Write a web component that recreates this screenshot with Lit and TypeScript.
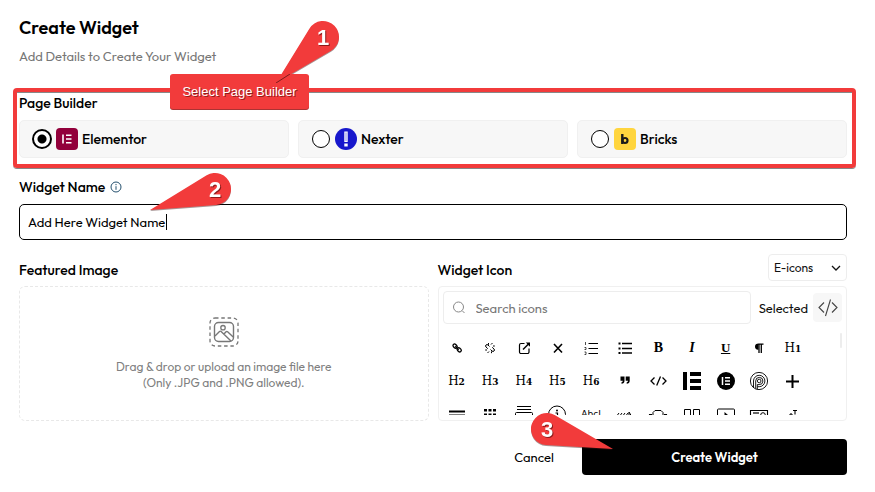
import { LitElement, html, svg, css, TemplateResult } from "lit";
import { customElement, property, state } from "lit/decorators.js";

/* Teardrop marker: a numbered disc whose two tangents meet at a tip. */
@customElement("step-marker")
class StepMarker extends LitElement {
  @property({ type: Number }) step = 1;
  /* Tip position relative to the centre of the disc. */
  @property({ type: Number }) dx = 0;
  @property({ type: Number }) dy = 0;

  static styles = css`
    :host { display: block; width: 32px; height: 32px; pointer-events: none; }
    .shape { display: block; overflow: visible; }
    .drop { fill: #f23b3b; filter: drop-shadow(0 1px 0 rgba(60, 20, 20, 0.45)); }
    .number {
      fill: #fff;
      font: bold 22px "Liberation Sans", Arial, sans-serif;
      text-anchor: middle;
      filter: drop-shadow(1px 1px 0 rgba(60, 0, 0, 0.55));
    }
  `;

  private outline(): string {
    const r = 16;
    const dist = Math.hypot(this.dx, this.dy);
    const dir = Math.atan2(this.dy, this.dx);
    const spread = Math.acos(r / dist);
    const at = (a: number) => `${(r * Math.cos(a)).toFixed(2)} ${(r * Math.sin(a)).toFixed(2)}`;
    return `M${this.dx} ${this.dy}L${at(dir + spread)}A${r} ${r} 0 1 1 ${at(dir - spread)}Z`;
  }

  render() {
    return html`<svg class="shape" width="32" height="32" viewBox="-16 -16 32 32" aria-hidden="true">
      <path class="drop" d=${this.outline()} />
      <text class="number" x="0" y="8">${this.step}</text>
    </svg>`;
  }
}

const line = (d: string, w = 1) =>
  svg`<path d=${d} fill="none" stroke="currentColor" stroke-width=${w} />`;
const solid = (d: string) => svg`<path d=${d} fill="currentColor" />`;

type Glyph = { name: string; art?: TemplateResult; text?: string; sub?: string; kind?: string };

const heading = (n: number): Glyph => ({ name: `Heading ${n}`, text: "H", sub: String(n) });

const GLYPHS: Glyph[] = [
  { name: "Link", art: svg`<g fill="none" stroke="currentColor" stroke-width="1.3"><rect x="5.800" y="6.400" width="4.600" height="3.200" rx="1.600" transform="rotate(45 8 8)"/><rect x="9.900" y="10.200" width="4.600" height="3.200" rx="1.600" transform="rotate(45 12.200 11.800)"/><path d="M8.300 8.300l3.400 3.400"/></g>` },
  { name: "Unlink", art: svg`<g fill="none" stroke="currentColor" stroke-width="1"><path d="M9.500 8.500L8 7a1.400 1.400 0 0 0-2 2l1.800 1.700M10.500 11.500L12 13a1.400 1.400 0 0 0 2-2l-1.800-1.700M8.500 5v1.800M11 6.500L12.500 5M13 8h1.800M5.200 12H7M9 13.500L7.500 15M11.500 13.400v1.800"/></g>` },
  { name: "External link", art: svg`${line("M10.500 5.500H7A1.500 1.500 0 0 0 5.500 7v7A1.500 1.500 0 0 0 7 15.500h6.500a1.500 1.500 0 0 0 1.500-1.500V10.500", 1.2)}${line("M9 11.500L14.500 6", 1.5)}${solid("M11.800 4.500h4.200v4.200z")}` },
  { name: "Close", art: line("M7 6l8 8.500M15 6l-8 8.500", 1.6) },
  { name: "Numbered list", art: svg`${line("M7.500 5.500H17M7.500 10.500H17M7.500 15.500H17", 1.2)}${line("M4.500 4v3M3.500 9.500h1.500v2h-1.500M3.500 14h1.500v2.500h-1.500", 0.7)}` },
  { name: "Bulleted list", art: svg`${line("M7 5.500H17M7 10.500H17M7 15H17", 1.5)}${line("M3.500 5.500h2M3.500 10.500h2M3.500 15h2", 1.8)}` },
  { name: "Bold", text: "B", kind: "bold" },
  { name: "Italic", text: "I", kind: "italic" },
  { name: "Underline", text: "U", kind: "under" },
  { name: "Paragraph", art: svg`${solid("M9.500 5.500h5v1.200h-5v5H9a3 3 0 0 1-3-3.100c0-1.800 1.300-3.100 3.500-3.100z")}${line("M10 6v9M12.300 6v9", 1.3)}` },
  heading(1),
  heading(2),
  heading(3),
  heading(4),
  heading(5),
  heading(6),
  { name: "Quote", art: solid("M5.500 5.500h4v4.200c0 2-1.200 3-3 3.100v-1.600c.9-.1 1.300-.6 1.300-1.500H5.500zM10.700 5.500h4v4.200c0 2-1.200 3-3 3.100v-1.600c.9-.1 1.300-.6 1.300-1.500h-2.300z") },
  { name: "Code", art: line("M6.500 6.500L3 10L6.500 13.500M14.500 6.500l3.500 3.500-3.500 3.500M12.500 5.500l-3.800 9", 1.3) },
  { name: "Elementor bars", art: solid("M1 1h4v18H1zM8 1h11v4H8zM8 8h11v4H8zM8 15h11v4H8z") },
  { name: "Elementor", art: svg`<circle cx="10" cy="10" r="9" fill="currentColor"/><path d="M6.500 6v8M9 6.800h5M9 10h5M9 13.200h5" stroke="#fff" stroke-width="1.500" fill="none"/>` },
  { name: "Parking spiral", art: svg`<g fill="none" stroke="currentColor" stroke-width=".9"><circle cx="10" cy="10" r="8.600"/><path d="M4.500 16.500V10a5.700 5.700 0 1 1 5.700 5.700H8.300v2.700M6.700 17.700V10a3.600 3.600 0 1 1 3.500 3.600H8.300v2.100"/><circle cx="10.200" cy="10" r="1.800"/></g>` },
  { name: "Plus", art: line("M9.500 4v13M3 10.500h13", 2) },
  { name: "Divider", art: line("M2 7.500h16M2 11.500h16", 1.8) },
  { name: "Grid", art: solid("M4 5h3v2.500H4zM8.500 5h3v2.500h-3zM13 5h3v2.500h-3zM4 9.500h3v3H4zM8.500 9.500h3v3h-3zM13 9.500h3v3h-3z") },
  { name: "Stack", art: svg`${line("M3 2.500h14M3 5.500h14")}${line("M1.500 16V9.500a1 1 0 0 1 1-1h15a1 1 0 0 1 1 1V16")}` },
  { name: "Accessibility", art: svg`<circle cx="10" cy="10.500" r="8.500" fill="none" stroke="currentColor"/><circle cx="10" cy="6.500" r="1" fill="currentColor"/>${line("M8.500 9h2v5", 1.2)}` },
  { name: "Animated headline", text: "AbcI", kind: "small" },
  { name: "Barcode", art: line("M1 13l3-4M4 13l3-4M7 13l3-4M10 13l3-4M14 13V8l3 5", 1) },
  { name: "Carousel", art: svg`${line("M5 12V8.500L7 6.500h6l2 2V12")}${line("M1.500 12V10.500h2.500M18.500 12V10.500H16", 1.1)}` },
  { name: "Columns", art: line("M2.500 16V5.500h6V16M11.500 16V5.500h6V16") },
  { name: "Slides", art: svg`${line("M1.500 16V6a1 1 0 0 1 1-1h15a1 1 0 0 1 1 1v10")}${solid("M8.500 8l4 3.500h-4z")}` },
  { name: "Form", art: svg`${line("M1.500 16V6.500h17V16", 1.1)}${line("M4 9h6", 1.2)}<circle cx="14" cy="11" r="2.300" fill="none" stroke="currentColor"/>` },
  { name: "Text path", art: line("M6 11h4M8 9v3M10 6.500h4M12 6.500v4", 1.1) },
];

@customElement("icon-picker")
class IconPicker extends LitElement {
  static styles = css`
    :host { display: block; }
    .panel {
      box-sizing: border-box;
      padding: 4px 4px 5px;
      border: 1px solid #f0f0f0;
      border-radius: 4px;
      color: #111;
    }
    .bar { display: flex; align-items: center; }
    .search {
      flex: 1;
      display: flex;
      align-items: center;
      gap: 10px;
      box-sizing: border-box;
      height: 33px;
      min-width: 0;
      padding: 0 8px;
      border: 1px solid #ededed;
      border-radius: 4px;
      color: #888;
    }
    .field {
      flex: 1;
      min-width: 0;
      padding: 0;
      border: 0;
      outline: 0;
      background: none;
      font: 400 13px/18px Outfit, Lato, sans-serif;
      color: #111;
    }
    .field::placeholder { color: #777; opacity: 1; }
    .selected { margin: 0 5px 0 8px; font-size: 13px; line-height: 18px; }
    .swatch {
      display: flex;
      align-items: center;
      justify-content: center;
      width: 29px;
      height: 29px;
      border-radius: 4px;
      background: #f7f7f7;
      color: #444;
    }
    .scroller {
      display: flex;
      justify-content: space-between;
      height: 82px;
      margin-top: 9px;
      overflow: hidden;
    }
    .grid {
      flex: 1;
      display: grid;
      grid-template-columns: repeat(11, 20px);
      grid-auto-rows: 20px;
      justify-content: space-between;
      row-gap: 13px;
      padding: 5px 37px 0 4px;
    }
    .icon {
      display: flex;
      align-items: center;
      justify-content: center;
      width: 20px;
      height: 20px;
      padding: 0;
      border: 0;
      background: none;
      color: #000;
      font: 12px/20px "DejaVu Serif", serif;
      cursor: pointer;
    }
    .sub { font-size: 9px; padding-top: 2px; font-weight: bold; }
    .bold { font: bold 14px/20px "Liberation Serif", serif; }
    .italic { font: italic bold 14px/20px "Liberation Serif", serif; }
    .under { font: bold 13px/20px "Liberation Serif", serif; text-decoration: underline; }
    .small { font: 9px/18px "DejaVu Sans", sans-serif; }
    .thumb { width: 2px; height: 15px; background: #ededed; border-radius: 1px; }
  `;

  render() {
    return html`<div class="panel">
      <div class="bar">
        <label class="search">
          <svg width="14" height="14" viewBox="0 0 14 14" fill="none" stroke="currentColor" aria-hidden="true">
            <circle cx="6.500" cy="6" r="5" /><path d="M10.200 9.700l2.300 2.300" />
          </svg>
          <input class="field" type="text" placeholder="Search icons" aria-label="Search icons" />
        </label>
        <span class="selected">Selected</span>
        <span class="swatch">
          <svg width="20" height="20" viewBox="0 0 20 20" fill="none" stroke="currentColor" stroke-width="1.100" aria-hidden="true">
            <path d="M6 4.500L1 9.500L6 14.500M14 4.500l5 5L14 14.500M12.500 1.500l-5 16.500" />
          </svg>
        </span>
      </div>
      <div class="scroller">
        <div class="grid">
          ${GLYPHS.map(
            (g) => html`<button type="button" class="icon" aria-label=${g.name}>
              ${g.art
                ? html`<svg width="20" height="20" viewBox="0 0 20 20" aria-hidden="true">${g.art}</svg>`
                : html`<span class=${g.kind ?? "head"}>${g.text}</span>${g.sub ? html`<span class="sub">${g.sub}</span>` : ""}`}
            </button>`
          )}
        </div>
        <span class="thumb"></span>
      </div>
    </div>`;
  }
}

const BUILDERS = [
  {
    id: "elementor",
    label: "Elementor",
    logo: svg`<rect width="22" height="22" rx="4" fill="#92003b"/><path d="M7 6.500v9M10 7.300h5.500M10 11h5.500M10 14.700h5.500" stroke="#fff" stroke-width="1.600" fill="none"/>`,
  },
  {
    id: "nexter",
    label: "Nexter",
    logo: svg`<circle cx="11" cy="11" r="11" fill="#1717cc"/><path d="M9.300 3.500h3.400v10.500h-3.400zM9.300 15.500h3.400v3h-3.400z" fill="#fff"/><path d="M11 4.500v8.500" stroke="#1717cc" stroke-width=".5"/>`,
  },
  {
    id: "bricks",
    label: "Bricks",
    logo: svg`<rect width="22" height="22" rx="4" fill="#ffd53e"/><path d="M8.300 6v10" stroke="#1a1a1a" stroke-width="2.400"/><circle cx="11" cy="12.500" r="2.500" fill="none" stroke="#1a1a1a" stroke-width="2.200"/>`,
  },
];

@customElement("app-root")
class AppRoot extends LitElement {
  @state() private builder = "elementor";

  static styles = css`
    :host {
      display: block;
      box-sizing: border-box;
      padding: 16px 28px 16px 19px;
      background: #fff;
      color: #000;
      font: 400 13px/18px Outfit, Lato, sans-serif;
    }
    .title { margin: 0; font-size: 18px; line-height: 24px; font-weight: 600; }
    .lead { margin: 7px 0 0; color: #777; }
    .group { position: relative; min-width: 0; margin: 28px 0 0; padding: 0; border: 0; }
    .label { display: block; padding: 0; font-size: 14px; line-height: 20px; font-weight: 500; }
    .choices { display: grid; grid-template-columns: repeat(3, 1fr); gap: 9px; margin-top: 7px; }
    .choice {
      display: flex;
      align-items: center;
      gap: 4px;
      box-sizing: border-box;
      height: 38px;
      padding: 0 12px;
      border: 1px solid #f0f0f0;
      border-radius: 5px;
      background: #f7f7f7;
      font-size: 14px;
      font-weight: 500;
    }
    .radio {
      appearance: none;
      box-sizing: border-box;
      width: 18px;
      height: 18px;
      margin: 1px;
      border: 1px solid #000;
      border-radius: 50%;
      background: #fff;
    }
    .radio:checked {
      width: 20px;
      height: 20px;
      margin: 0;
      border-width: 2px;
      background: radial-gradient(circle, #000 4px, #fff 5px);
    }
    .frame {
      position: absolute;
      inset: -5px -9px -10px -6px;
      border: 4px solid #f23b3b;
      border-radius: 4px;
      box-shadow: 0 1px 0 #888, inset 0 1px 0 #888;
      pointer-events: none;
    }
    .note {
      position: absolute;
      top: -19px;
      left: 151px;
      box-sizing: border-box;
      width: 139px;
      height: 35px;
      border-radius: 3px;
      background: #f23b3b;
      box-shadow: 0 1px 0 #a33;
      color: #fff;
      font: 13px/36px "Liberation Sans", Arial, sans-serif;
      text-align: center;
      text-shadow: 1px 1px 0 rgba(60, 0, 0, 0.55);
    }
    .leader { position: absolute; top: -19px; left: 257px; }
    .marker { position: absolute; }
    .first { top: -72px; left: 288px; }
    .second { top: -4px; left: 180px; }
    .third { top: -26px; left: -51px; }
    .name { position: relative; margin-top: 19px; }
    .caption { display: flex; align-items: center; gap: 5px; color: #000; }
    .text {
      display: block;
      box-sizing: border-box;
      width: 100%;
      height: 36px;
      margin-top: 7px;
      padding: 0 8px;
      border: 1px solid #000;
      border-radius: 5px;
      outline: 0;
      background: #fff;
      color: #000;
      caret-color: transparent;
      font: inherit;
    }
    .caret { position: absolute; left: 147px; bottom: 10px; width: 1px; height: 16px; background: #000; }
    .columns { display: grid; grid-template-columns: 1fr 1fr; gap: 9px; margin-top: 14px; }
    .column { display: flex; flex-direction: column; gap: 5px; min-width: 0; }
    .head { display: flex; align-items: flex-end; justify-content: space-between; height: 27px; }
    .head .label { padding-bottom: 1px; }
    .pick { position: relative; display: flex; align-items: center; }
    .select {
      appearance: none;
      width: 79px;
      height: 27px;
      padding: 0 5px;
      border: 1px solid #ededed;
      border-radius: 4px;
      background: #fff;
      color: #111;
      font: 400 12px/18px Outfit, Lato, sans-serif;
    }
    .chevron { position: absolute; right: 6px; pointer-events: none; }
    .drop {
      flex: 1;
      display: flex;
      flex-direction: column;
      align-items: center;
      justify-content: center;
      gap: 12px;
      box-sizing: border-box;
      border: 1px dashed #e8e8e8;
      border-radius: 6px;
      color: #808080;
      font-size: 12px;
      line-height: 16px;
      text-align: center;
    }
    .file { position: absolute; width: 1px; height: 1px; opacity: 0; }
    .actions { display: flex; justify-content: flex-end; margin-top: 18px; }
    .cancel, .create {
      height: 36px;
      padding: 0;
      border: 0;
      border-radius: 4px;
      font: inherit;
      cursor: pointer;
    }
    .cancel { width: 96px; background: none; color: #000; }
    .submit { position: relative; width: 32%; }
    .create { width: 100%; background: #000; color: #fff; font-weight: 600; }
  `;

  render() {
    return html`
      <h1 class="title">Create Widget</h1>
      <p class="lead">Add Details to Create Your Widget</p>

      <div class="group" role="radiogroup" aria-labelledby="builder-label">
        <span class="label" id="builder-label">Page Builder</span>
        <div class="choices">
          ${BUILDERS.map(
            (b) => html`<label class="choice">
              <input
                class="radio"
                type="radio"
                name="builder"
                value=${b.id}
                .checked=${this.builder === b.id}
                @change=${() => (this.builder = b.id)}
              />
              <svg width="22" height="22" viewBox="0 0 22 22" aria-hidden="true">${b.logo}</svg>
              <span>${b.label}</span>
            </label>`
          )}
        </div>
        <span class="frame"></span>
        <step-marker class="marker first" .step=${1} .dx=${-47} .dy=${46}></step-marker>
        <span class="note">Select Page Builder</span>
        <svg class="leader" width="14" height="9" viewBox="0 0 14 9" aria-hidden="true">
          <path d="M0 9L14 0" stroke="#7a1c1c" />
        </svg>
      </div>

      <div class="name">
        <label class="label caption" for="widget-name">
          Widget Name
          <svg width="12" height="12" viewBox="0 0 12 12" fill="none" stroke="#24506e" aria-hidden="true">
            <circle cx="6" cy="6" r="5" /><path d="M6 5.200v3.600M6 3v1.200" />
          </svg>
        </label>
        <input class="text" id="widget-name" type="text" value="Add Here Widget Name" />
        <span class="caret"></span>
        <step-marker class="marker second" .step=${2} .dx=${-65} .dy=${21}></step-marker>
      </div>

      <div class="columns">
        <div class="column">
          <div class="head"><span class="label">Featured Image</span></div>
          <label class="drop">
            <input class="file" type="file" accept=".jpg,.png" />
            <svg width="30" height="30" viewBox="0 0 30 30" fill="none" stroke="#777" aria-hidden="true">
              <rect x="1" y="1" width="28" height="28" rx="5" stroke-width="1.300" stroke-dasharray="3.500 2.800" />
              <rect x="5.500" y="5.500" width="19" height="19" rx="4" stroke-width="1.400" />
              <circle cx="14" cy="10.700" r="2.200" stroke-width="1.300" />
              <path d="M6 19l4.500-4.500a1.200 1.200 0 0 1 1.600 0L22 24M15 17l2-2.200a1.200 1.200 0 0 1 1.600 0l5.600 5.200" stroke-width="1.400" />
            </svg>
            <span>Drag &amp; drop or upload an image file here<br />(Only .JPG and .PNG allowed).</span>
          </label>
        </div>
        <div class="column">
          <div class="head">
            <span class="label">Widget Icon</span>
            <span class="pick">
              <select class="select" aria-label="Icon library"><option>E-icons</option></select>
              <svg class="chevron" width="10" height="6" viewBox="0 0 10 6" fill="none" stroke="#111" stroke-width="1.300" aria-hidden="true">
                <path d="M1 1l4 4 4-4" />
              </svg>
            </span>
          </div>
          <icon-picker></icon-picker>
        </div>
      </div>

      <div class="actions">
        <button class="cancel" type="button">Cancel</button>
        <div class="submit">
          <button class="create" type="button">Create Widget</button>
          <step-marker class="marker third" .step=${3} .dx=${66} .dy=${20}></step-marker>
        </div>
      </div>
    `;
  }
}
